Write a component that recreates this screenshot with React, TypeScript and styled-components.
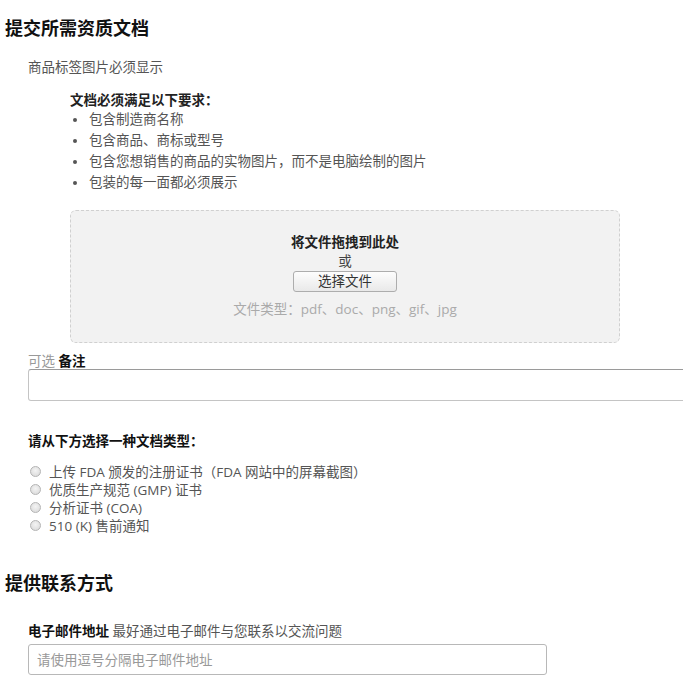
import React from "react";
import styled, { createGlobalStyle } from "styled-components";

const GlobalStyle = createGlobalStyle`
  html, body {
    margin: 0;
    padding: 0;
    background: #fff;
    overflow: hidden;
  }
  body {
    font-family: "Open Sans", "Noto Sans CJK SC", sans-serif;
    font-size: 13.5px;
    color: #555;
  }
`;

const Page = styled.div`
  padding: 15px 0 0 5px;
  width: 720px;
`;

const SectionTitle = styled.h2<{ $gap?: number }>`
  margin: ${(p) => p.$gap ?? 0}px 0 0;
  font-size: 18px;
  line-height: 26px;
  font-weight: 700;
  color: #111;
`;

const Section = styled.div`
  padding-left: 23px;
`;

const Note = styled.div`
  margin-top: 17px;
  line-height: 18px;
  color: #555;
`;

const Requirements = styled.div`
  margin: 15px 0 0 42px;
`;

const ReqHeading = styled.div`
  font-weight: 700;
  color: #222;
  line-height: 18px;
`;

const BulletList = styled.ul`
  list-style: none;
  margin: 0;
  padding: 0;
`;

const Bullet = styled.li`
  position: relative;
  padding-left: 19px;
  line-height: 21px;
  color: #555;
  &::before {
    content: "";
    position: absolute;
    left: 3px;
    top: 9px;
    width: 4px;
    height: 4px;
    border-radius: 50%;
    background: #555;
  }
`;

const DropZone = styled.div`
  margin-top: 17px;
  width: 550px;
  height: 133px;
  box-sizing: border-box;
  background: #f2f2f2;
  border: 1px dashed #d0d0d0;
  border-radius: 6px;
  display: flex;
  flex-direction: column;
  align-items: center;
  padding-top: 22px;
`;

const DropTitle = styled.div`
  font-weight: 700;
  color: #222;
  line-height: 18px;
`;

const DropOr = styled.div`
  line-height: 20px;
  color: #444;
`;

const ChooseButton = styled.button`
  width: 104px;
  height: 21px;
  padding: 0;
  font: inherit;
  font-size: 13.5px;
  line-height: 19px;
  color: #333;
  background: linear-gradient(#fdfdfd, #e9e9e9);
  border: 1px solid #adadad;
  border-radius: 3px;
`;

const FileTypes = styled.div`
  margin-top: 8px;
  line-height: 18px;
  color: #aaa;
`;

const FieldLabel = styled.div<{ $gap: number }>`
  margin-top: ${(p) => p.$gap}px;
  line-height: 16px;
  color: #222;
`;

const Muted = styled.span`
  color: #999;
`;

const Strong = styled.span`
  font-weight: 700;
  color: #111;
`;

const Hint = styled.span`
  color: #555;
`;

const NoteArea = styled.textarea`
  display: block;
  width: 690px;
  height: 32px;
  box-sizing: border-box;
  margin: 0;
  border: 1px solid #c4c4c4;
  border-top-color: #9a9a9a;
  border-radius: 3px;
  resize: none;
  font: inherit;
`;

const ChoiceHeading = styled.div`
  margin-top: 31px;
  line-height: 18px;
  font-weight: 700;
  color: #111;
`;

const RadioList = styled.div`
  margin-top: 12px;
  display: flex;
  flex-direction: column;
`;

const RadioRow = styled.label`
  display: flex;
  align-items: center;
  height: 18px;
  color: #555;
`;

const RadioDot = styled.span`
  flex: none;
  width: 11px;
  height: 11px;
  box-sizing: border-box;
  margin: 0 8px 0 2px;
  border-radius: 50%;
  border: 1px solid #b4b4b4;
  background: radial-gradient(circle at 50% 40%, #f4f4f4, #d6d6d6);
`;

const EmailInput = styled.input`
  display: block;
  margin-top: 5px;
  width: 519px;
  height: 31px;
  box-sizing: border-box;
  padding: 0 8px;
  border: 1px solid #b8b8b8;
  border-radius: 3px;
  font: inherit;
  font-size: 13.5px;
  color: #333;
  &::placeholder {
    color: #999;
  }
`;

const requirements = [
  "包含制造商名称",
  "包含商品、商标或型号",
  "包含您想销售的商品的实物图片，而不是电脑绘制的图片",
  "包装的每一面都必须展示",
];

const docTypes = [
  "上传 FDA 颁发的注册证书（FDA 网站中的屏幕截图）",
  "优质生产规范 (GMP) 证书",
  "分析证书 (COA)",
  "510 (K) 售前通知",
];

const App: React.FC = () => {
  return (
    <>
      <GlobalStyle />
      <Page>
        <SectionTitle>提交所需资质文档</SectionTitle>
        <Section>
          <Note>商品标签图片必须显示</Note>
          <Requirements>
            <ReqHeading>文档必须满足以下要求：</ReqHeading>
            <BulletList>
              {requirements.map((r) => (
                <Bullet key={r}>{r}</Bullet>
              ))}
            </BulletList>
            <DropZone>
              <DropTitle>将文件拖拽到此处</DropTitle>
              <DropOr>或</DropOr>
              <ChooseButton type="button">选择文件</ChooseButton>
              <FileTypes>文件类型：pdf、doc、png、gif、jpg</FileTypes>
            </DropZone>
          </Requirements>

          <FieldLabel $gap={10}>
            <Muted>可选</Muted> <Strong>备注</Strong>
          </FieldLabel>
          <NoteArea />

          <ChoiceHeading>请从下方选择一种文档类型：</ChoiceHeading>
          <RadioList>
            {docTypes.map((t) => (
              <RadioRow key={t}>
                <RadioDot />
                {t}
              </RadioRow>
            ))}
          </RadioList>
        </Section>

        <SectionTitle $gap={36}>提供联系方式</SectionTitle>
        <Section>
          <FieldLabel $gap={27}>
            <Strong>电子邮件地址</Strong> <Hint>最好通过电子邮件与您联系以交流问题</Hint>
          </FieldLabel>
          <EmailInput placeholder="请使用逗号分隔电子邮件地址" />
        </Section>
      </Page>
    </>
  );
};

export default App;
